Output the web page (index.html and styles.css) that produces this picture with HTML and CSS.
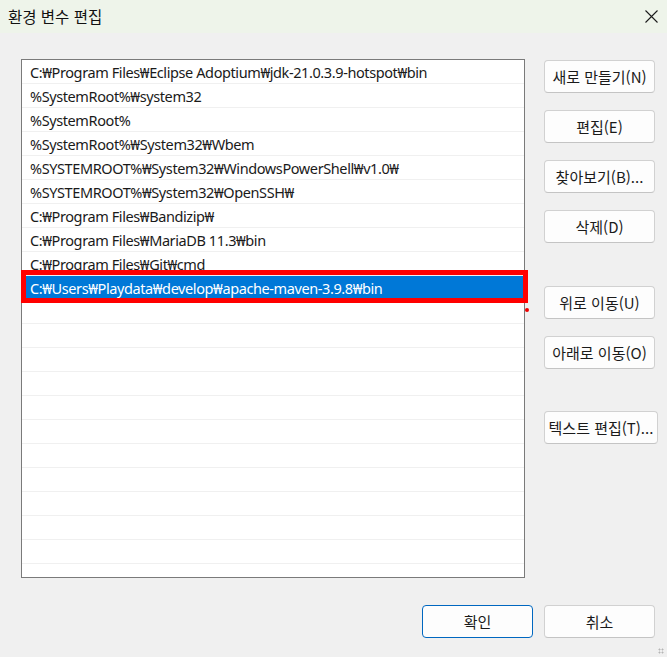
FILE: index.html
```html
<!DOCTYPE html>
<html lang="ko">
<head>
<meta charset="utf-8">
<title>환경 변수 편집</title>
<link rel="stylesheet" href="styles.css">
</head>
<body>
<div class="window">
  <div class="titlebar">
    <span class="title">환경 변수 편집</span>
    <svg class="close" width="13" height="13" viewBox="0 0 13 13"><path d="M0.5 0.5 L12.5 12.5 M12.5 0.5 L0.5 12.5" stroke="#1b1b1b" stroke-width="1.1" fill="none"/></svg>
  </div>
  <div class="main">
    <div class="list">
      <div class="row">C:₩Program Files₩Eclipse Adoptium₩jdk-21.0.3.9-hotspot₩bin</div>
      <div class="row">%SystemRoot%₩system32</div>
      <div class="row">%SystemRoot%</div>
      <div class="row">%SystemRoot%₩System32₩Wbem</div>
      <div class="row">%SYSTEMROOT%₩System32₩WindowsPowerShell₩v1.0₩</div>
      <div class="row">%SYSTEMROOT%₩System32₩OpenSSH₩</div>
      <div class="row">C:₩Program Files₩Bandizip₩</div>
      <div class="row">C:₩Program Files₩MariaDB 11.3₩bin</div>
      <div class="row">C:₩Program Files₩Git₩cmd</div>
      <div class="row selected">C:₩Users₩Playdata₩develop₩apache-maven-3.9.8₩bin</div>
      <div class="row"></div><div class="row"></div><div class="row"></div><div class="row"></div>
      <div class="row"></div><div class="row"></div><div class="row"></div><div class="row"></div>
      <div class="row"></div><div class="row"></div><div class="row"></div><div class="row"></div>
    </div>
    <div class="side">
      <div class="group">
        <button class="btn">새로 만들기(N)</button>
        <button class="btn">편집(E)</button>
        <button class="btn">찾아보기(B)...</button>
        <button class="btn">삭제(D)</button>
      </div>
      <div class="group">
        <button class="btn">위로 이동(U)</button>
        <button class="btn">아래로 이동(O)</button>
      </div>
      <div class="group">
        <button class="btn wide">텍스트 편집(T)...</button>
      </div>
    </div>
  </div>
  <div class="footer">
    <button class="btn primary">확인</button>
    <button class="btn">취소</button>
  </div>
  <div class="mark-box"></div>
  <div class="mark-dot"></div>
  <div class="grip"></div>
</div>
</body>
</html>
```

FILE: styles.css
```css
* { box-sizing: border-box; }
html, body { margin: 0; padding: 0; }
body {
  background: #f0f0f0;
  font-family: "Noto Sans", "Noto Sans CJK KR", sans-serif;
  font-size: 15px;
  color: #1a1a1a;
}
.window {
  position: relative;
  width: 667px;
  height: 657px;
  overflow: hidden;
  background: #f0f0f0;
}
.titlebar {
  height: 33px;
  background: #eef4ea;
  display: flex;
  align-items: center;
  justify-content: space-between;
  padding: 0 8px 2px 8px;
}
.title {
  font-family: "Noto Sans CJK KR", sans-serif;
  font-size: 15.5px;
  color: #111;
}
.close { margin-right: 1px; margin-top: 1px; }
.main {
  display: flex;
  padding: 26px 0 0 21px;
}
.list {
  width: 504px;
  height: 519px;
  border: 1px solid #7a7a7a;
  background: #fff;
  overflow: hidden;
}
.row {
  height: 24px;
  line-height: 24px;
  border-bottom: 1px solid #f0f0f0;
  padding-left: 8px;
  white-space: nowrap;
  color: #1a1a1a;
  font-size: 14.5px;
  letter-spacing: -0.4px;
}
.row.selected {
  background: #0078d7;
  color: #fff;
}
.side {
  display: flex;
  flex-direction: column;
  margin-left: 19px;
  padding-top: 1px;
}
.group {
  display: flex;
  flex-direction: column;
  gap: 17px;
  margin-bottom: 43px;
}
.group:nth-child(2) { margin-bottom: 42px; }
.btn {
  width: 111px;
  height: 33px;
  border: 1px solid #d1d1d1;
  border-bottom-color: #c4c4c4;
  border-radius: 4px;
  background: #fdfdfd;
  font-family: "Noto Sans CJK KR", sans-serif;
  font-size: 15px;
  color: #1a1a1a;
  padding: 0;
  white-space: nowrap;
}
.btn.wide { width: 114px; }
.btn.primary {
  border: 1px solid #0067c0;
}
.footer {
  display: flex;
  justify-content: flex-end;
  gap: 11px;
  padding: 27px 12px 0 0;
}
.mark-box {
  position: absolute;
  left: 21px;
  top: 270px;
  width: 507px;
  height: 33px;
  border: 5px solid #ff0000;
}
.mark-dot {
  position: absolute;
  left: 525px;
  top: 308px;
  width: 4px;
  height: 4px;
  border-radius: 50%;
  background: #e00;
}
.grip {
  position: absolute;
  right: 3px;
  bottom: 3px;
  width: 6px;
  height: 6px;
  background:
    radial-gradient(circle, #b5b5b5 0.9px, transparent 1.1px) 0 0 / 3px 3px;
}
```
